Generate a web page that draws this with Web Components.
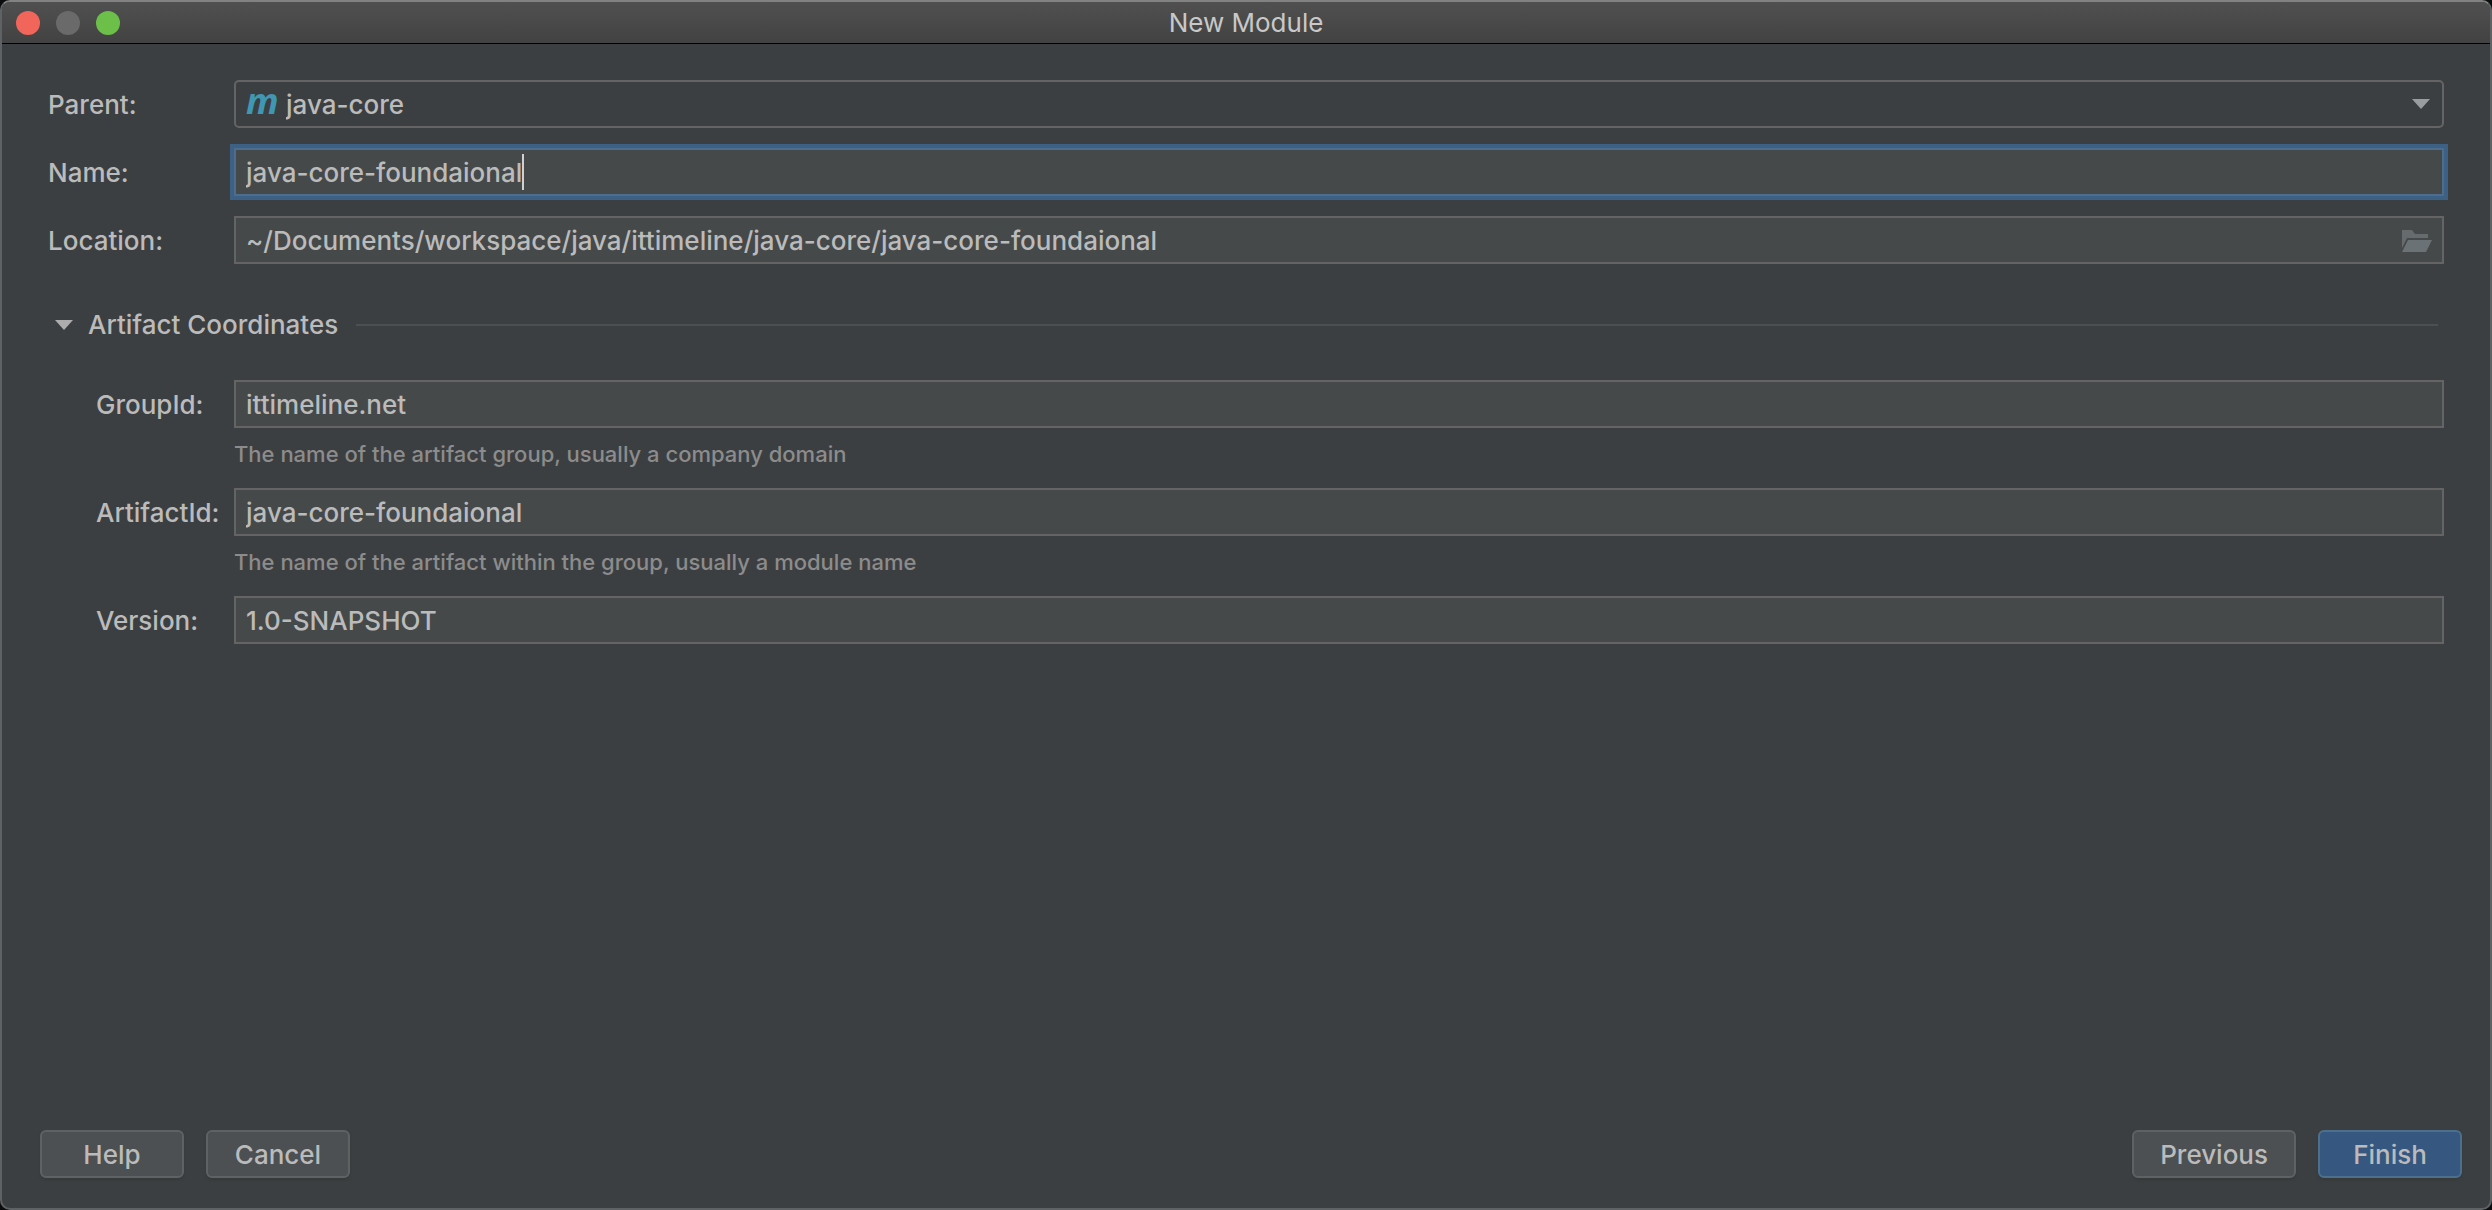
<!DOCTYPE html>
<html lang="en">
<head>
<meta charset="utf-8">
<title>New Module</title>
<style>
  html, body { height: 100%; margin: 0; }
  body { background: #0b0c0d; font: 500 26px/32px Inter, "Liberation Sans", sans-serif; color: #bbbbbb; }
</style>
</head>
<body>
<module-dialog>
  <title-bar slot="title">New Module</title-bar>
  <module-form></module-form>
  <push-button slot="left">Help</push-button>
  <push-button slot="left">Cancel</push-button>
  <push-button slot="right">Previous</push-button>
  <push-button slot="right" primary>Finish</push-button>
</module-dialog>

<script>
const define = (name, html, setup) => {
  const template = document.createElement('template');
  template.innerHTML = html;
  customElements.define(name, class extends HTMLElement {
    constructor() {
      super();
      this.attachShadow({ mode: 'open' }).append(template.content.cloneNode(true));
    }
    connectedCallback() { if (setup) setup(this, this.shadowRoot); }
  });
};

define('title-bar', `
  <style>
    :host { display: grid; grid-template-columns: 1fr auto 1fr; align-items: center; height: 41px;
      padding: 0 14px; border-bottom: 1px solid #000; background: linear-gradient(#505050, #424242); }
    .lights { display: flex; gap: 16px; }
    .lights button { width: 24px; height: 24px; padding: 0; border: 0; border-radius: 50%; }
    .close { background: #f2655a; }
    .minimize { background: #6a6a6a; }
    .zoom { background: #6cc04a; }
    h1 { margin: 0; font: inherit; font-weight: 400; line-height: 32px; color: #c8c8c8; }
  </style>
  <div class="lights">
    <button class="close" aria-label="Close"></button>
    <button class="minimize" aria-label="Minimize" disabled></button>
    <button class="zoom" aria-label="Zoom"></button>
  </div>
  <h1><slot></slot></h1>`);

define('push-button', `
  <style>
    :host { display: block; }
    button { display: block; min-width: 144px; height: 48px; padding: 2px 26px 0; font: inherit; color: #bbbbbb;
      background: #4c5052; border: 2px solid #5e6264; border-radius: 6px; box-shadow: 0 2px 2px #363a3c; }
    :host([primary]) button { background: #365880; border-color: #4c708c; }
  </style>
  <button type="button"><slot></slot></button>`);

define('combo-field', `
  <style>
    :host { display: flex; }
    label { flex: none; width: 186px; box-sizing: border-box; height: 48px; padding-top: 1px; line-height: 48px; }
    .box { flex: 1; display: grid; box-sizing: border-box; height: 48px; border: 2px solid #646464; border-radius: 5px; }
    .box > * { grid-area: 1 / 1; }
    select { appearance: none; width: 100%; margin: 0; padding: 2px 50px 0; border: 0; border-radius: 3px; background: transparent; font: inherit; color: inherit; outline: 0; }
    .module { justify-self: start; align-self: center; margin-left: 8px; pointer-events: none; overflow: visible; }
    .arrow { justify-self: end; align-self: center; margin-right: 12px; pointer-events: none; }
    svg { display: block; }
  </style>
  <label for="control"></label>
  <div class="box">
    <select id="control"><option></option></select>
    <svg class="module" width="36" height="44" viewBox="0 0 36 44" aria-hidden="true">
      <text x="2" y="32" font-family="Open Sans" font-size="36" font-weight="700" font-style="italic" fill="#3f97b3">m</text>
    </svg>
    <svg class="arrow" width="18" height="10" viewBox="0 0 18 10" aria-hidden="true"><path d="M0 0H18L9 10Z" fill="#9a9da0"/></svg>
  </div>`, (host, root) => {
  root.querySelector('label').textContent = host.getAttribute('label');
  root.querySelector('option').textContent = host.getAttribute('value');
});

define('text-field', `
  <style>
    :host { display: grid; grid-template-columns: 186px 1fr; }
    :host([nested]) { grid-template-columns: 138px 1fr; }
    label { box-sizing: border-box; height: 48px; padding-top: 1px; line-height: 48px; white-space: nowrap; }
    .box { display: flex; align-items: center; min-width: 0; box-sizing: border-box; height: 48px; padding: 0 10px; background: #45494a; border: 2px solid #646464; }
    input { flex: 1; min-width: 0; height: 44px; padding: 0; border: 0; background: transparent; font: inherit; color: inherit; outline: 0; }
    .caret { display: none; flex: none; width: 2px; height: 36px; background: #d0d0d0; }
    :host([active]) .box { border-color: #4d6d8f; box-shadow: 0 0 0 4px #3d6185; }
    :host([active]) input { flex: none; field-sizing: content; caret-color: transparent; }
    :host([active]) .caret { display: block; }
    .hint { display: none; grid-column: 2; margin: 10px 0 0; font-size: 22px; line-height: 32px; color: #8c8c8c; }
    :host([hint]) .hint { display: block; }
  </style>
  <label for="control"></label>
  <div class="box"><input id="control" type="text" spellcheck="false" autocomplete="off"><span class="caret"></span><slot></slot></div>
  <p class="hint"></p>`, (host, root) => {
  root.querySelector('label').textContent = host.getAttribute('label');
  root.querySelector('input').value = host.getAttribute('value');
  root.querySelector('.hint').textContent = host.getAttribute('hint') || '';
});

define('browse-button', `
  <style>
    :host { display: block; }
    button { display: block; padding: 0; border: 0; background: none; }
    svg { display: block; }
  </style>
  <button type="button" aria-label="Browse">
    <svg width="32" height="24" viewBox="0 0 32 24" aria-hidden="true">
      <path d="M2 2H12L15 6H28V10H7L2 20Z" fill="#666b6d"/>
      <path d="M8 12H32L26 24H2Z" fill="#6a7275"/>
    </svg>
  </button>`);

define('form-section', `
  <style>
    :host { display: block; }
    header { display: flex; align-items: center; gap: 18px; padding: 0 6px 0 7px; }
    button { display: flex; align-items: center; gap: 15px; padding: 0; border: 0; background: none; font: inherit; line-height: 32px; color: inherit; }
    hr { flex: 1; height: 2px; margin: 0; border: 0; background: #4d5052; }
    .body { display: flex; flex-direction: column; gap: 18px; padding: 39px 0 0 48px; }
  </style>
  <header>
    <button type="button" aria-expanded="true">
      <svg width="18" height="10" viewBox="0 0 18 10" aria-hidden="true"><path d="M0 0H18L9 10Z" fill="#adadad"/></svg>
      <span></span>
    </button>
    <hr>
  </header>
  <div class="body"><slot></slot></div>`, (host, root) => {
  root.querySelector('span').textContent = host.getAttribute('heading');
});

define('module-form', `
  <style>
    :host { display: block; }
    form { display: flex; flex-direction: column; gap: 20px; padding: 36px 46px 0; }
    form-section { margin-top: 25px; }
  </style>
  <form>
    <combo-field label="Parent:" value="java-core"></combo-field>
    <text-field label="Name:" value="java-core-foundaional" active></text-field>
    <text-field label="Location:" value="~/Documents/workspace/java/ittimeline/java-core/java-core-foundaional"><browse-button></browse-button></text-field>
    <form-section heading="Artifact Coordinates">
      <text-field nested label="GroupId:" value="ittimeline.net" hint="The name of the artifact group, usually a company domain"></text-field>
      <text-field nested label="ArtifactId:" value="java-core-foundaional" hint="The name of the artifact within the group, usually a module name"></text-field>
      <text-field nested label="Version:" value="1.0-SNAPSHOT"></text-field>
    </form-section>
  </form>`);

define('module-dialog', `
  <style>
    :host { display: flex; flex-direction: column; box-sizing: border-box; min-height: 100%; overflow: hidden;
      background: #3c3f41; border: 2px solid #5f6264; border-top-color: #828282; border-radius: 10px; }
    main { flex: 1; }
    footer { display: flex; justify-content: space-between; padding: 30px 28px 30px 38px; }
    footer div { display: flex; gap: 22px; }
  </style>
  <slot name="title"></slot>
  <main><slot></slot></main>
  <footer>
    <div><slot name="left"></slot></div>
    <div><slot name="right"></slot></div>
  </footer>`);
</script>
</body>
</html>
